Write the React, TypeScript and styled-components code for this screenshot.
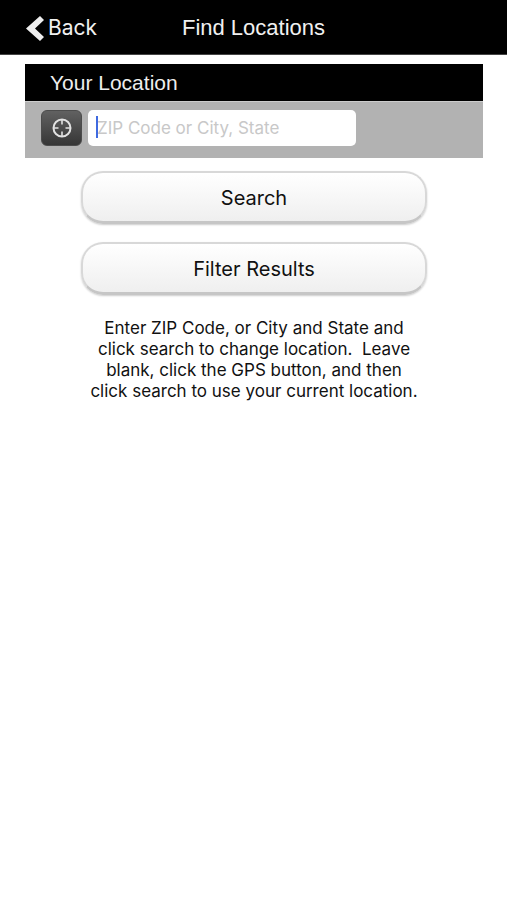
import React from "react";
import styled, { createGlobalStyle } from "styled-components";

const GlobalStyle = createGlobalStyle`
  *, *::before, *::after { box-sizing: border-box; }
  body {
    margin: 0;
    background: #fff;
    color: #111;
    font-family: Inter, "Liberation Sans", sans-serif;
  }
  button, input { font-family: inherit; }
`;

const Header = styled.header`
  display: grid;
  grid-template-columns: 1fr auto 1fr;
  align-items: center;
  height: 55px;
  padding: 2px 24px 0;
  background: #000;
  color: #f0f0f0;
  border-bottom: 1px solid #444;
`;

const BackButton = styled.button`
  display: flex;
  align-items: center;
  justify-self: start;
  gap: 4px;
  padding: 0;
  border: 0;
  background: none;
  color: inherit;
  font-size: 21px;
  line-height: 28px;
`;

const Title = styled.h1`
  margin: 0;
  font-family: "Liberation Sans", sans-serif;
  font-size: 22px;
  line-height: 28px;
  font-weight: 400;
`;

const Main = styled.main`
  padding: 9px 24px 0 25px;
`;

const SectionTitle = styled.label`
  display: block;
  padding: 0 25px;
  background: #000;
  color: #eee;
  font-family: "Liberation Sans", sans-serif;
  font-size: 21px;
  line-height: 37px;
`;

const LocationRow = styled.div`
  display: flex;
  align-items: center;
  gap: 6px;
  height: 57px;
  padding: 0 16px 4px;
  background: #b2b2b2;
  border-top: 1px solid #ccc;
`;

const GpsButton = styled.button`
  display: grid;
  place-items: center;
  width: 41px;
  height: 36px;
  padding: 0;
  border: 1px solid #4c4c4c;
  border-radius: 6px;
  background: linear-gradient(#616161, #363636);
`;

const Field = styled.div`
  position: relative;
  flex: 0 1 268px;
`;

const Input = styled.input`
  display: block;
  width: 100%;
  height: 36px;
  padding: 0 9px;
  border: 0;
  border-radius: 5px;
  outline: none;
  background: #fff;
  color: #111;
  font-size: 17px;
  caret-color: transparent;

  &::placeholder { color: #c8c8c8; opacity: 1; }
`;

const Caret = styled.span`
  position: absolute;
  left: 8px;
  top: 6px;
  width: 2px;
  height: 22px;
  background: #3f6ae0;
  pointer-events: none;
`;

const Actions = styled.div`
  display: flex;
  flex-direction: column;
  gap: 18px;
  padding: 13px 56px 0;
`;

const ActionButton = styled.button`
  height: 53px;
  padding: 2px 20px 0;
  border: 2px solid #d8d8d8;
  border-bottom: 3px solid #c6c6c6;
  border-radius: 22px;
  background: linear-gradient(#fff, #efefef);
  box-shadow: 0 1px 2px #ccc;
  color: #111;
  font-size: 20px;
  line-height: 28px;
`;

const Help = styled.p`
  max-width: 336px;
  margin: 23px auto 0;
  font-size: 17px;
  line-height: 21px;
  text-align: center;
`;

const BackIcon = () => (
  <svg width="20" height="28" viewBox="0 0 20 28" aria-hidden="true">
    <path d="M16 2L20 6L11 14.5L20 23L16 27L2 14.5Z" fill="#eee" />
  </svg>
);

const TargetIcon = () => (
  <svg width="22" height="22" viewBox="0 0 22 22" fill="none" stroke="#e2e2e2" aria-hidden="true">
    <circle cx="11" cy="11" r="8.5" strokeWidth="2" />
    <path d="M11 3V7.5M11 14.5V19M3 11H7.5M14.5 11H19" strokeWidth="1.6" />
  </svg>
);

export default function App() {
  return (
    <>
      <GlobalStyle />
      <Header>
        <BackButton type="button"><BackIcon />Back</BackButton>
        <Title>Find Locations</Title>
      </Header>
      <Main>
        <SectionTitle htmlFor="location">Your Location</SectionTitle>
        <LocationRow>
          <GpsButton type="button" aria-label="Use current location"><TargetIcon /></GpsButton>
          <Field>
            <Input id="location" type="text" placeholder="ZIP Code or City, State" />
            <Caret aria-hidden="true" />
          </Field>
        </LocationRow>
        <Actions>
          <ActionButton type="button">Search</ActionButton>
          <ActionButton type="button">Filter Results</ActionButton>
        </Actions>
        <Help>
          Enter ZIP Code, or City and State and click search to change location.&nbsp; Leave blank, click the GPS button, and then click search to use your current location.
        </Help>
      </Main>
    </>
  );
}
